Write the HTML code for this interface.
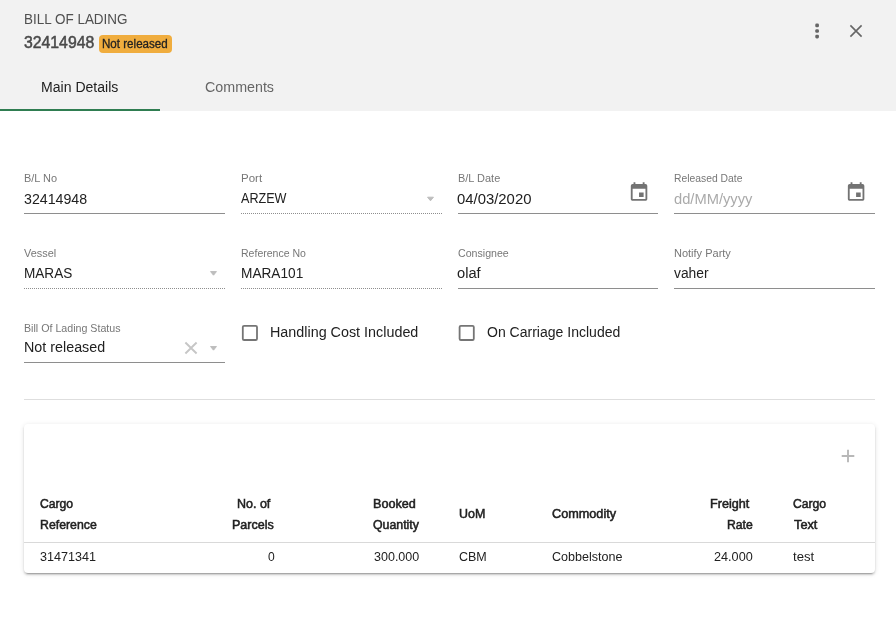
<!DOCTYPE html>
<html><head><meta charset="utf-8">
<style>
*{box-sizing:border-box;margin:0;padding:0}
html,body{width:896px;height:632px;overflow:hidden;background:#fff;font-family:"Liberation Sans",sans-serif;color:#212121}
.abs{position:absolute}
.t{position:absolute;white-space:nowrap;transform-origin:0 0}
.m{-webkit-text-stroke:0.5px currentColor}
.l{-webkit-text-stroke:0.3px currentColor}
.ul{position:absolute;height:1px;background:#8e8e8e}
.uld{position:absolute;height:1px;background-image:repeating-linear-gradient(90deg,#8e8e8e 0,#8e8e8e 1px,transparent 1px,transparent 2px)}
</style></head><body>
<div class="abs" style="left:0;top:0;width:896px;height:111px;background:#f2f2f2"></div>
<div class="abs" style="left:99px;top:35px;width:73px;height:18px;border-radius:4px;background:#f0ad3e"></div>
<div class="abs" style="left:0;top:109px;width:160px;height:2px;background:#2f7d51"></div>

<!-- underlines -->
<div class="ul" style="left:24px;top:213px;width:201px"></div>
<div class="uld" style="left:241px;top:213px;width:201px"></div>
<div class="ul" style="left:458px;top:213px;width:200px"></div>
<div class="ul" style="left:674px;top:213px;width:201px"></div>
<div class="uld" style="left:24px;top:288px;width:201px"></div>
<div class="uld" style="left:241px;top:288px;width:201px"></div>
<div class="ul" style="left:458px;top:288px;width:200px"></div>
<div class="ul" style="left:674px;top:288px;width:201px"></div>
<div class="ul" style="left:24px;top:362px;width:201px"></div>

<!-- calendar icons -->

<!-- dropdown arrows -->
<!-- clear X -->

<!-- checkboxes -->

<div class="abs" style="left:24px;top:399px;width:851px;height:1px;background:#dedede"></div>
<!-- card -->
<div class="abs" style="left:24px;top:423.5px;width:851px;height:149px;background:#fff;border-radius:4px;box-shadow:0 3px 1px -2px rgba(0,0,0,.2),0 2px 2px 0 rgba(0,0,0,.14),0 1px 5px 0 rgba(0,0,0,.12)"></div>
<div class="abs" style="left:24px;top:542px;width:851px;height:1px;background:#d9d9d9"></div>

<svg class="abs" style="left:0;top:0" width="896" height="632" viewBox="0 0 896 632">
<g fill="#666"><rect x="815.25" y="23.6" width="3.7" height="3.7" rx="1.4"/><rect x="815.25" y="29.15" width="3.7" height="3.7" rx="1.4"/><rect x="815.25" y="34.7" width="3.7" height="3.7" rx="1.4"/></g>
<path d="M850.4 25.4L861.6 36.6M861.6 25.4L850.4 36.6" stroke="#666" stroke-width="1.6" fill="none"/>
<path transform="translate(628.05 181.2) scale(0.9167 0.935)" fill="#737373" d="M17 12h-5v5h5v-5zM16 1v2H8V1H6v2H5c-1.11 0-1.99.9-1.99 2L3 19c0 1.1.89 2 2 2h14c1.1 0 2-.9 2-2V5c0-1.1-.9-2-2-2h-1V1h-2zm3 18H5V8h14v11z"/>
<path transform="translate(845.1 181.2) scale(0.9167 0.935)" fill="#737373" d="M17 12h-5v5h5v-5zM16 1v2H8V1H6v2H5c-1.11 0-1.99.9-1.99 2L3 19c0 1.1.89 2 2 2h14c1.1 0 2-.9 2-2V5c0-1.1-.9-2-2-2h-1V1h-2zm3 18H5V8h14v11z"/>
<path d="M427.55 197.20h5.9l-2.95 3.6z" fill="#bdbdbd" stroke="#bdbdbd" stroke-width="1" stroke-linejoin="round"/>
<path d="M210.55 271.60h5.9l-2.95 3.6z" fill="#bdbdbd" stroke="#bdbdbd" stroke-width="1" stroke-linejoin="round"/>
<path d="M210.55 346.55h5.9l-2.95 3.6z" fill="#bdbdbd" stroke="#bdbdbd" stroke-width="1" stroke-linejoin="round"/>
<path d="M185.4 342.5L196.6 353.5M196.6 342.5L185.4 353.5" stroke="#c6c6c6" stroke-width="1.9" fill="none"/>
<rect x="242.8" y="325.8" width="14.2" height="14.2" rx="1.3" fill="none" stroke="#757575" stroke-width="1.8"/>
<rect x="459.6" y="325.8" width="14.2" height="14.2" rx="1.3" fill="none" stroke="#757575" stroke-width="1.8"/>
<path d="M848 449.7V462.3M841.7 456H854.3" stroke="#b8b8b8" stroke-width="1.9" fill="none"/>
</svg>
<div id="txt" style="position:absolute;left:0;top:0;width:896px;height:632px;will-change:transform">
<div class="t" id="h1" style="left:23.57px;top:10.15px;font-size:14px;line-height:18px;color:#505050;transform:scaleX(0.9620)">BILL OF LADING</div>
<div class="t m" id="h2" style="left:24.41px;top:33.26px;font-size:16px;line-height:20px;color:#4a4a4a;transform:scaleX(0.9862)">32414948</div>
<div class="t l" id="h3" style="left:102.30px;top:35.84px;font-size:12px;line-height:16px;color:#222;transform:scaleX(0.9656)">Not released</div>
<div class="t" id="tab1" style="left:40.88px;top:78.15px;font-size:14px;line-height:18px;color:#222;transform:scaleX(1.0042)">Main Details</div>
<div class="t" id="tab2" style="left:205.22px;top:78.15px;font-size:14px;line-height:18px;color:#666;transform:scaleX(1.0195)">Comments</div>
<div class="t" id="l1" style="left:24.46px;top:170.94px;font-size:11px;line-height:15px;color:#777;transform:scaleX(0.9958)">B/L No</div>
<div class="t" id="l2" style="left:240.50px;top:170.94px;font-size:11px;line-height:15px;color:#777;transform:scaleX(1.0459)">Port</div>
<div class="t" id="l3" style="left:457.53px;top:170.94px;font-size:11px;line-height:15px;color:#777;transform:scaleX(0.9959)">B/L Date</div>
<div class="t" id="l4" style="left:673.53px;top:170.94px;font-size:11px;line-height:15px;color:#777;transform:scaleX(0.9399)">Released Date</div>
<div class="t" id="l5" style="left:24.32px;top:245.69px;font-size:11px;line-height:15px;color:#777;transform:scaleX(0.9919)">Vessel</div>
<div class="t" id="l6" style="left:240.56px;top:245.69px;font-size:11px;line-height:15px;color:#777;transform:scaleX(0.9568)">Reference No</div>
<div class="t" id="l7" style="left:457.67px;top:245.69px;font-size:11px;line-height:15px;color:#777;transform:scaleX(0.9648)">Consignee</div>
<div class="t" id="l8" style="left:673.53px;top:245.69px;font-size:11px;line-height:15px;color:#777;transform:scaleX(1.0002)">Notify Party</div>
<div class="t" id="l9" style="left:24.32px;top:320.69px;font-size:11px;line-height:15px;color:#777;transform:scaleX(0.9690)">Bill Of Lading Status</div>
<div class="t" id="v1" style="left:24.46px;top:190.15px;font-size:14px;line-height:18px;color:#212121;transform:scaleX(1.0132)">32414948</div>
<div class="t" id="v2" style="left:241.36px;top:189.15px;font-size:14px;line-height:18px;color:#212121;transform:scaleX(0.9002)">ARZEW</div>
<div class="t" id="v3" style="left:457.38px;top:190.15px;font-size:14px;line-height:18px;color:#212121;transform:scaleX(1.0621)">04/03/2020</div>
<div class="t" id="v4" style="left:674.09px;top:190.15px;font-size:14px;line-height:18px;color:#aaaaaa;transform:scaleX(1.0501)">dd/MM/yyyy</div>
<div class="t" id="v5" style="left:23.64px;top:264.15px;font-size:14px;line-height:18px;color:#212121;transform:scaleX(0.9699)">MARAS</div>
<div class="t" id="v6" style="left:240.61px;top:264.15px;font-size:14px;line-height:18px;color:#212121;transform:scaleX(0.9757)">MARA101</div>
<div class="t" id="v7" style="left:457.07px;top:264.15px;font-size:14px;line-height:18px;color:#212121;transform:scaleX(1.0484)">olaf</div>
<div class="t" id="v8" style="left:674.32px;top:264.15px;font-size:14px;line-height:18px;color:#212121;transform:scaleX(0.9885)">vaher</div>
<div class="t" id="v9" style="left:24.02px;top:338.15px;font-size:14px;line-height:18px;color:#212121;transform:scaleX(1.0228)">Not released</div>
<div class="t" id="c1" style="left:269.85px;top:323.15px;font-size:14px;line-height:18px;color:#212121;transform:scaleX(1.0247)">Handling Cost Included</div>
<div class="t" id="c2" style="left:486.76px;top:323.15px;font-size:14px;line-height:18px;color:#212121;transform:scaleX(1.0016)">On Carriage Included</div>
<div class="t m" id="th1a" style="left:40.30px;top:496.34px;font-size:12px;line-height:16px;color:#212121;transform:scaleX(1.0134)">Cargo</div>
<div class="t m" id="th1b" style="left:40.09px;top:517.09px;font-size:12px;line-height:16px;color:#212121;transform:scaleX(1.0247)">Reference</div>
<div class="t m" id="th2a" style="left:237.27px;top:496.34px;font-size:12px;line-height:16px;color:#212121;transform:scaleX(1.0405)">No. of</div>
<div class="t m" id="th2b" style="left:232.38px;top:517.09px;font-size:12px;line-height:16px;color:#212121;transform:scaleX(1.0426)">Parcels</div>
<div class="t m" id="th3a" style="left:372.99px;top:496.34px;font-size:12px;line-height:16px;color:#212121;transform:scaleX(1.0525)">Booked</div>
<div class="t m" id="th3b" style="left:372.50px;top:517.09px;font-size:12px;line-height:16px;color:#212121;transform:scaleX(1.0283)">Quantity</div>
<div class="t m" id="th4" style="left:458.91px;top:505.84px;font-size:12px;line-height:16px;color:#212121;transform:scaleX(1.0364)">UoM</div>
<div class="t m" id="th5" style="left:552.23px;top:505.84px;font-size:12px;line-height:16px;color:#212121;transform:scaleX(1.0560)">Commodity</div>
<div class="t m" id="th6a" style="left:710.05px;top:496.34px;font-size:12px;line-height:16px;color:#212121;transform:scaleX(1.0529)">Freight</div>
<div class="t m" id="th6b" style="left:727.25px;top:517.09px;font-size:12px;line-height:16px;color:#212121;transform:scaleX(1.0170)">Rate</div>
<div class="t m" id="th7a" style="left:793.30px;top:496.34px;font-size:12px;line-height:16px;color:#212121;transform:scaleX(1.0134)">Cargo</div>
<div class="t m" id="th7b" style="left:793.60px;top:517.09px;font-size:12px;line-height:16px;color:#212121;transform:scaleX(1.0634)">Text</div>
<div class="t" id="td1" style="left:39.70px;top:548.84px;font-size:12px;line-height:16px;color:#212121;transform:scaleX(1.0483)">31471341</div>
<div class="t" id="td2" style="left:268.26px;top:548.84px;font-size:12px;line-height:16px;color:#212121;transform:scaleX(1.0072)">0</div>
<div class="t" id="td3" style="left:373.56px;top:548.84px;font-size:12px;line-height:16px;color:#212121;transform:scaleX(1.0428)">300.000</div>
<div class="t" id="td4" style="left:459.01px;top:548.84px;font-size:12px;line-height:16px;color:#212121;transform:scaleX(1.0407)">CBM</div>
<div class="t" id="td5" style="left:551.95px;top:548.84px;font-size:12px;line-height:16px;color:#212121;transform:scaleX(1.0463)">Cobbelstone</div>
<div class="t" id="td6" style="left:714.13px;top:548.84px;font-size:12px;line-height:16px;color:#212121;transform:scaleX(1.0544)">24.000</div>
<div class="t" id="td7" style="left:793.14px;top:548.84px;font-size:12px;line-height:16px;color:#212121;transform:scaleX(1.0928)">test</div>
</div>
</body></html>
